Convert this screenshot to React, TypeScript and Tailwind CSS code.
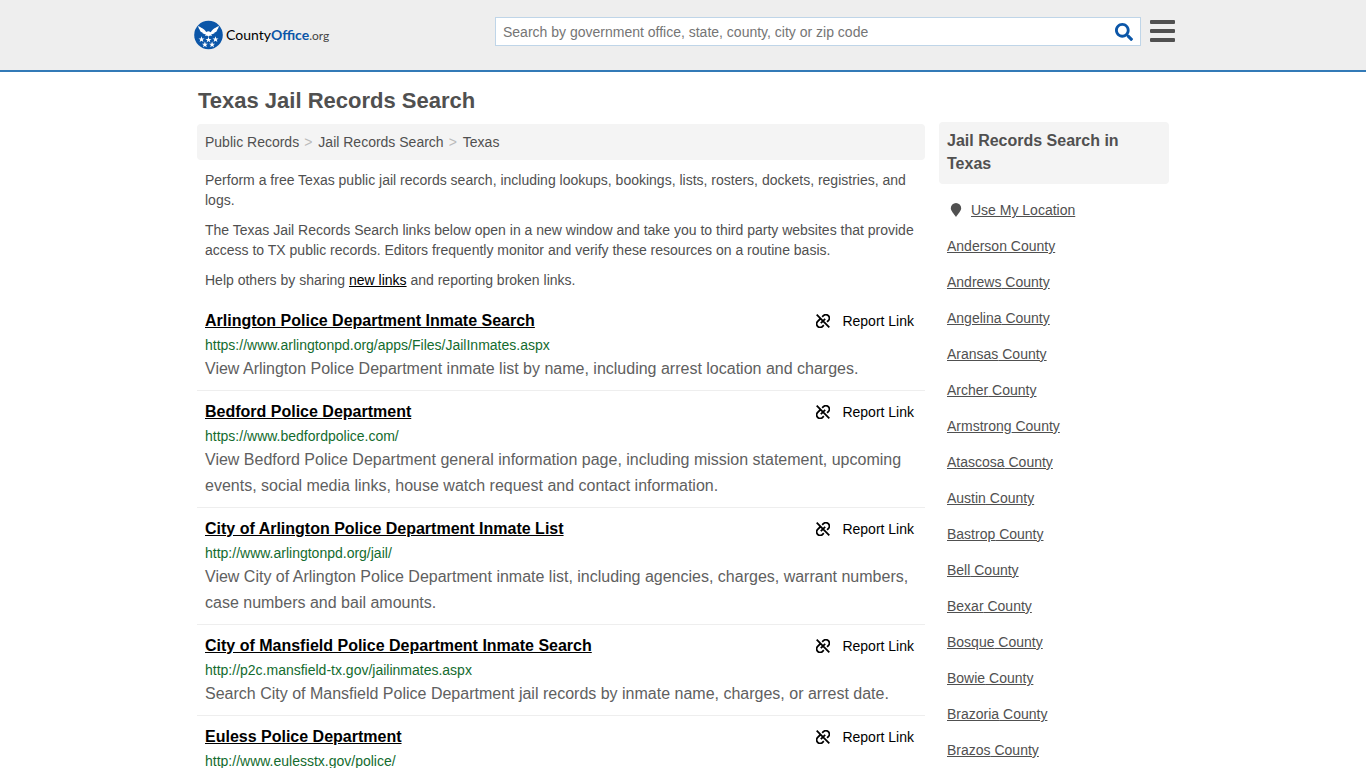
import { FaSearch } from "react-icons/fa";

const results = [
  {
    title: "Arlington Police Department Inmate Search",
    url: "https://www.arlingtonpd.org/apps/Files/JailInmates.aspx",
    text: "View Arlington Police Department inmate list by name, including arrest location and charges.",
  },
  {
    title: "Bedford Police Department",
    url: "https://www.bedfordpolice.com/",
    text: "View Bedford Police Department general information page, including mission statement, upcoming events, social media links, house watch request and contact information.",
  },
  {
    title: "City of Arlington Police Department Inmate List",
    url: "http://www.arlingtonpd.org/jail/",
    text: "View City of Arlington Police Department inmate list, including agencies, charges, warrant numbers, case numbers and bail amounts.",
  },
  {
    title: "City of Mansfield Police Department Inmate Search",
    url: "http://p2c.mansfield-tx.gov/jailinmates.aspx",
    text: "Search City of Mansfield Police Department jail records by inmate name, charges, or arrest date.",
  },
  {
    title: "Euless Police Department",
    url: "http://www.eulesstx.gov/police/",
    text: "",
  },
];

const counties = [
  "Anderson", "Andrews", "Angelina", "Aransas", "Archer", "Armstrong", "Atascosa", "Austin",
  "Bastrop", "Bell", "Bexar", "Bosque", "Bowie", "Brazoria", "Brazos",
];

const STAR = "M0-3.1 .8-.9 3-.9 1.2.4 1.9 2.6 0 1.3-1.9 2.6-1.2.4-3-.9-.8-.9Z";

function Logo() {
  return (
    <a href="#home" aria-label="CountyOffice.org" className="flex items-center gap-0.5">
      <svg viewBox="0 0 30 30" className="size-[30px] shrink-0" aria-hidden="true">
        <circle cx="14.5" cy="15" r="14.3" fill="#0b56a8" />
        <g fill="#fff" transform="translate(-.5 0)">
          <path d="M4.6 5.8C7.2 7.8 10.6 8.4 12.7 12L13.8 11.6 15 11.2 16.4 11.8 17.3 12.2C19.2 8.5 22.6 7.9 25.4 5.8 25.1 8.2 24.4 9.4 23.2 10.2L23.8 10.3C23 11.8 22 12.4 20.8 12.6L21.3 13C20 14 18.8 14.2 17.6 14.5L18.6 16 16.4 15.5 15 16.8 13.6 15.5 11.4 16 12.4 14.5C11.2 14.2 10 14 8.7 13L9.2 12.6C8 12.4 7 11.8 6.2 10.3L6.8 10.2C5.6 9.4 4.9 8.2 4.6 5.8Z" />
          {[[8, 19.4], [15, 19.8], [22, 19.4], [11.4, 24.6], [18.6, 24.6]].map(([x, y]) => (
            <path key={x} d={STAR} transform={`translate(${x} ${y})`} />
          ))}
        </g>
      </svg>
      <span className="font-[Lato,sans-serif] text-sm leading-5 text-black">
        County<b className="font-bold text-[#0b56a8]">Office</b>
        <span className="text-xs text-[#444]">.org</span>
      </span>
    </a>
  );
}

function BrokenLinkIcon() {
  return (
    <svg viewBox="0 0 14 14" className="size-3.5" fill="none" stroke="currentColor" strokeWidth="1.8" aria-hidden="true">
      <path d="M.7.7 13.3 13.3M6.2 2.9 7.4 1.7A3.45 3.45 0 0 1 12.3 6.6L11.1 7.8M7.8 11.1 6.6 12.3A3.45 3.45 0 0 1 1.7 7.4L4.6 4.5M9.2 4.8 4.8 9.2" />
    </svg>
  );
}

function PinIcon() {
  return (
    <svg viewBox="0 0 12 14" className="h-3.5 w-3" fill="#505050" aria-hidden="true">
      <path d="M6 0A5.2 5.2 0 0 0 .8 5.2C.8 8 4 10.6 6 14 8 10.6 11.2 8 11.2 5.2A5.2 5.2 0 0 0 6 0Z" />
    </svg>
  );
}

function Separator() {
  return <span className="pr-1.5 pl-[5px] text-[#bbb]">&gt;</span>;
}

export default function App() {
  return (
    <div className="min-h-screen bg-white font-['Liberation_Sans',Arial,sans-serif] text-sm text-[#505050]">
      <header className="border-b-2 border-[#337ab7] bg-[#eee]">
        <div className="mx-auto flex h-[70px] max-w-[984px] items-start justify-between pl-[3px]">
          <div className="pt-5">
            <Logo />
          </div>
          <div className="flex items-start gap-[9px] pt-[17px]">
            <form role="search" className="flex h-[29px] w-[646px] items-center border border-[#bfd5e8] bg-white pr-[7px]">
              <input
                type="search"
                aria-label="Search"
                placeholder="Search by government office, state, county, city or zip code"
                className="min-w-0 flex-1 px-[7px] text-sm outline-none placeholder:text-[#757575]"
              />
              <button type="button" aria-label="Submit search" className="text-[#0b56a8]">
                <FaSearch className="size-[18px]" />
              </button>
            </form>
            <button type="button" aria-label="Menu" className="flex w-[25px] flex-col gap-[5px] pt-[3px]">
              <span className="h-1 w-full rounded-[1px] bg-[#505050]" />
              <span className="h-1 w-full rounded-[1px] bg-[#505050]" />
              <span className="h-1 w-full rounded-[1px] bg-[#505050]" />
            </button>
          </div>
        </div>
      </header>

      <div className="mx-auto flex max-w-[972px] items-start gap-3.5">
        <main className="min-w-0 flex-1 pt-[15px]">
          <h1 className="pl-px text-[22px] leading-7 font-bold">Texas Jail Records Search</h1>
          <nav aria-label="Breadcrumb" className="mt-[9px] flex rounded bg-[#f4f4f4] p-2 leading-5">
            <a href="#records">Public Records</a>
            <Separator />
            <a href="#jail">Jail Records Search</a>
            <Separator />
            <a href="#texas">Texas</a>
          </nav>
          <div className="space-y-2.5 px-2 py-2.5 leading-5">
            <p>
              Perform a free Texas public jail records search, including lookups, bookings, lists, rosters, dockets,
              registries, and logs.
            </p>
            <p>
              The Texas Jail Records Search links below open in a new window and take you to third party websites that
              provide access to TX public records. Editors frequently monitor and verify these resources on a routine
              basis.
            </p>
            <p>
              Help others by sharing{" "}
              <a href="#new" className="text-black underline">
                new links
              </a>{" "}
              and reporting broken links.
            </p>
          </div>
          <ul>
            {results.map((r) => (
              <li key={r.title} className="border-b border-[#eee] p-2">
                <div className="flex items-center justify-between pr-[3px]">
                  <a href={r.url} className="text-base leading-[25px] font-bold text-black underline">
                    {r.title}
                  </a>
                  <button type="button" className="flex items-center gap-3 text-sm text-black">
                    <BrokenLinkIcon />
                    Report Link
                  </button>
                </div>
                <p className="pt-px leading-[22px] text-[#136b2e]">{r.url}</p>
                {r.text && <p className="text-base leading-[26px] text-[#606060]">{r.text}</p>}
              </li>
            ))}
          </ul>
        </main>

        <aside className="w-[230px] shrink-0 pt-[50px]">
          <h2 className="rounded bg-[#f4f4f4] px-2 pt-[7px] pb-[9px] text-base leading-[23px] font-bold">
            Jail Records Search in Texas
          </h2>
          <ul className="px-2 pt-2 leading-9">
            <li className="flex items-center gap-[9px] pl-[3px]">
              <PinIcon />
              <a href="#location" className="underline">
                Use My Location
              </a>
            </li>
            {counties.map((c) => (
              <li key={c}>
                <a href={`#${c}`} className="underline">
                  {c} County
                </a>
              </li>
            ))}
          </ul>
        </aside>
      </div>
    </div>
  );
}
